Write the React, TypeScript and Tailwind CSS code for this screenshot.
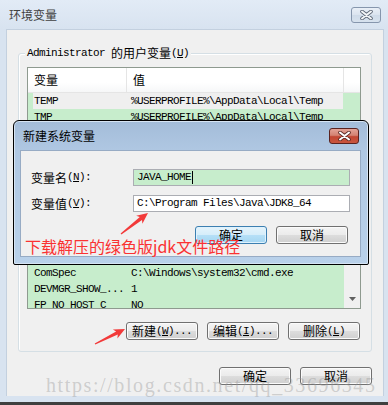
import clsx from "clsx";
import type { ReactNode } from "react";

const mono = "font-['Liberation_Mono',monospace] text-[11px] tracking-[-0.6px]";

function Key({ k }: { k: string }) {
  return (
    <span className={mono}>
      (<u>{k}</u>)
    </span>
  );
}

function Btn({ children, primary }: { children: ReactNode; primary?: boolean }) {
  return (
    <div
      className={clsx(
        "flex h-[18px] w-[72px] items-center justify-center rounded-[3px] border text-[12px] leading-none text-black",
        primary
          ? "border-[#3c7fb1] bg-[linear-gradient(#e5f4fc_0%,#d5edfa_50%,#b6e0f7_50%,#a4d5f2_100%)] shadow-[inset_0_0_0_1px_#dff2fd]"
          : "border-[#707070] bg-[linear-gradient(#f4f4f4_0%,#ebebeb_50%,#dddddd_50%,#cfcfcf_100%)] shadow-[inset_0_0_0_1px_#fbfbfb]"
      )}
    >
      {children}
    </div>
  );
}

function CloseX({ red }: { red?: boolean }) {
  return (
    <div
      className={clsx(
        "flex h-[16px] w-[30px] items-center justify-center rounded-[3px] border",
        red
          ? "border-[#5a2320] bg-[linear-gradient(#e3a397_0%,#d48272_45%,#c24632_55%,#c9563f_100%)]"
          : "border-[#8696ad] bg-[linear-gradient(#e9eff7_0%,#dbe4ef_50%,#cfdbe9_51%,#d7e2ee_100%)]"
      )}
    >
      <svg width="15" height="10" viewBox="0 0 15 10">
        <path d="M3 1.5 L12 8.5 M12 1.5 L3 8.5" stroke={red ? "#5b2a26" : "#5c6675"} strokeWidth="3.6" strokeLinecap="round" />
        <path d="M3 1.5 L12 8.5 M12 1.5 L3 8.5" stroke={red ? "#ffffff" : "#f4f6f8"} strokeWidth="2" strokeLinecap="round" />
      </svg>
    </div>
  );
}

function arrow(x1: number, y1: number, x2: number, y2: number) {
  const dx = x2 - x1;
  const dy = y2 - y1;
  const len = Math.hypot(dx, dy);
  const ux = dx / len;
  const uy = dy / len;
  const nx = -uy;
  const ny = ux;
  const bx = x2 - ux * 11;
  const by = y2 - uy * 11;
  const ix = x2 - ux * 9;
  const iy = y2 - uy * 9;
  const p = (x: number, y: number) => `${x.toFixed(1)},${y.toFixed(1)}`;
  return [
    p(x1 + nx * 0.6, y1 + ny * 0.6),
    p(ix + nx * 1.8, iy + ny * 1.8),
    p(bx + nx * 5, by + ny * 5),
    p(x2, y2),
    p(bx - nx * 5, by - ny * 5),
    p(ix - nx * 1.8, iy - ny * 1.8),
    p(x1 - nx * 0.6, y1 - ny * 0.6),
  ].join(" ");
}

function Row({ name, value, selected }: { name: string; value: string; selected?: boolean }) {
  return (
    <div className="flex h-[16px] items-center">
      <div className={clsx("ml-[5px] flex h-[16px] w-[310px] items-center", selected && "bg-[#efefef]")}>
        <span className={clsx(mono, "w-[98px] shrink-0 pl-[1px]")}>{name}</span>
        <span className={mono}>{value}</span>
      </div>
    </div>
  );
}

export default function App() {
  return (
    <div className="relative h-[405px] w-[388px] overflow-hidden bg-[#d8e3f0] font-['Noto_Sans_CJK_SC',sans-serif] text-[12px] text-black">
      {/* outer window title */}
      <div className="flex h-[29px] items-center justify-between bg-[linear-gradient(#e2ebf6,#d8e3f0)] pl-[9px] pr-[7px]">
        <span className="leading-none text-[#404040]">环境变量</span>
        <CloseX />
      </div>

      {/* outer client area */}
      <div className="ml-[6px] mr-[4px] flex h-[367px] flex-col border-x border-t border-[#c3d0df] bg-[#f0f0f0] pt-[23px]">
        <div className="relative ml-[11px] mr-[11px] flex h-[299px] flex-col rounded-[3px] border border-[#d5dfe5] pl-[8px] pr-[10px] pt-[13px] shadow-[inset_1px_1px_0_#fff]">
          <div className="absolute left-[6px] top-[-9px] flex h-[16px] items-center bg-[#f0f0f0] px-[2px] leading-none">
            <span className={mono}>Administrator&nbsp;</span>
            <span>的用户变量</span>
            <Key k="U" />
          </div>

          {/* list view */}
          <div className="flex h-[242px] flex-col border border-[#8e9a8f] bg-[#c7edcc]">
            <div className="flex h-[25px] shrink-0 items-center border-b border-[#e5e5e5] bg-[linear-gradient(#ffffff_0%,#ffffff_60%,#f6f7f8_100%)]">
              <div className="flex h-full w-[99px] items-center border-r border-[#e5e5e5] pl-[6px] leading-none">变量</div>
              <div className="flex h-full w-[217px] items-center border-r border-[#e5e5e5] pl-[6px] leading-none">值</div>
              <div className="h-full flex-1" />
            </div>
            <Row name="TEMP" value="%USERPROFILE%\AppData\Local\Temp" selected />
            <Row name="TMP" value="%USERPROFILE%\AppData\Local\Temp" />
            <div className="h-[140px] shrink-0" />
            <div className="flex h-[43px] overflow-hidden">
              <div className="w-[316px] shrink-0">
                <Row name="ComSpec" value="C:\Windows\system32\cmd.exe" />
                <Row name="DEVMGR_SHOW_..." value="1" />
                <Row name="FP_NO_HOST_C" value="NO" />
              </div>
              <div className="flex flex-1 flex-col items-center justify-end bg-[#f0f0f0] pb-[7px]">
                <svg width="7" height="4" viewBox="0 0 7 4">
                  <path d="M0 0 H7 L3.5 4 Z" fill="#606060" />
                </svg>
              </div>
            </div>
          </div>

          <div className="mt-[13px] flex justify-end gap-[9px] pr-[1px]">
            <Btn>
              新建<Key k="W" />
              <span className={mono}>...</span>
            </Btn>
            <Btn>
              编辑<Key k="I" />
              <span className={mono}>...</span>
            </Btn>
            <Btn>
              删除<Key k="L" />
            </Btn>
          </div>
        </div>

        <div className="mt-[15px] flex justify-end gap-[9px] pr-[11px]">
          <Btn>确定</Btn>
          <Btn>取消</Btn>
        </div>
      </div>
      <div className="h-[6px] bg-[#d8e3f0]" />
      <div className="h-[3px] bg-[#3f3f3f]" />

      {/* new system variable dialog */}
      <div className="absolute left-[13px] top-[120px] flex h-[145px] w-[356px] flex-col rounded-t-[6px] rounded-b-[2px] border border-black bg-[linear-gradient(#a3bcd9_0%,#afc7e2_20%,#b9d1ea_100%)] shadow-[inset_0_0_0_1px_#d6e4f3]">
        <div className="flex h-[29px] shrink-0 items-center justify-between pl-[9px] pr-[9px]">
          <span className="leading-none">新建系统变量</span>
          <CloseX red />
        </div>
        <div className="mb-[7px] ml-[6px] mr-[7px] flex flex-1 flex-col border border-[#97abc4] bg-[#f0f0f0] pl-[10px] pr-[10px] pt-[18px]">
          <div className="flex h-[17px] items-center">
            <div className="flex w-[102px] shrink-0 items-center leading-none">
              变量名<Key k="N" />
              <span className={mono}>:</span>
            </div>
            <div className="flex h-[17px] flex-1 items-center border border-[#abadb3] bg-[#c7edcc] pl-[3px]">
              <span className={mono}>JAVA_HOME</span>
              <span className="ml-[1px] h-[13px] w-[1px] bg-black" />
            </div>
          </div>
          <div className="mt-[9px] flex h-[17px] items-center">
            <div className="flex w-[102px] shrink-0 items-center leading-none">
              变量值<Key k="V" />
              <span className={mono}>:</span>
            </div>
            <div className="flex h-[17px] flex-1 items-center border border-[#abadb3] bg-white pl-[3px]">
              <span className={mono}>C:\Program Files\Java\JDK8_64</span>
            </div>
          </div>
          <div className="mt-[14px] flex justify-end gap-[9px] pr-[2px]">
            <Btn primary>确定</Btn>
            <Btn>取消</Btn>
          </div>
        </div>
      </div>

      {/* annotations */}
      <div className="absolute left-[25px] top-[236px] text-[16px] leading-[20px] text-[#fa3232]">下载解压的绿色版jdk文件路径</div>
      <svg className="pointer-events-none absolute left-0 top-0" width="388" height="405">
        <polygon points={arrow(121, 234, 148, 213)} fill="#f23a3a" />
        <polygon points={arrow(95, 344, 125, 329)} fill="#f23a3a" />
      </svg>
      <div className="pointer-events-none absolute left-[46px] top-[373px] font-['Liberation_Serif',serif] text-[20px] leading-[24px] tracking-[1.6px] text-[rgba(150,150,150,0.4)]">
        https://blog.csdn.net/qq_33696345
      </div>
    </div>
  );
}
